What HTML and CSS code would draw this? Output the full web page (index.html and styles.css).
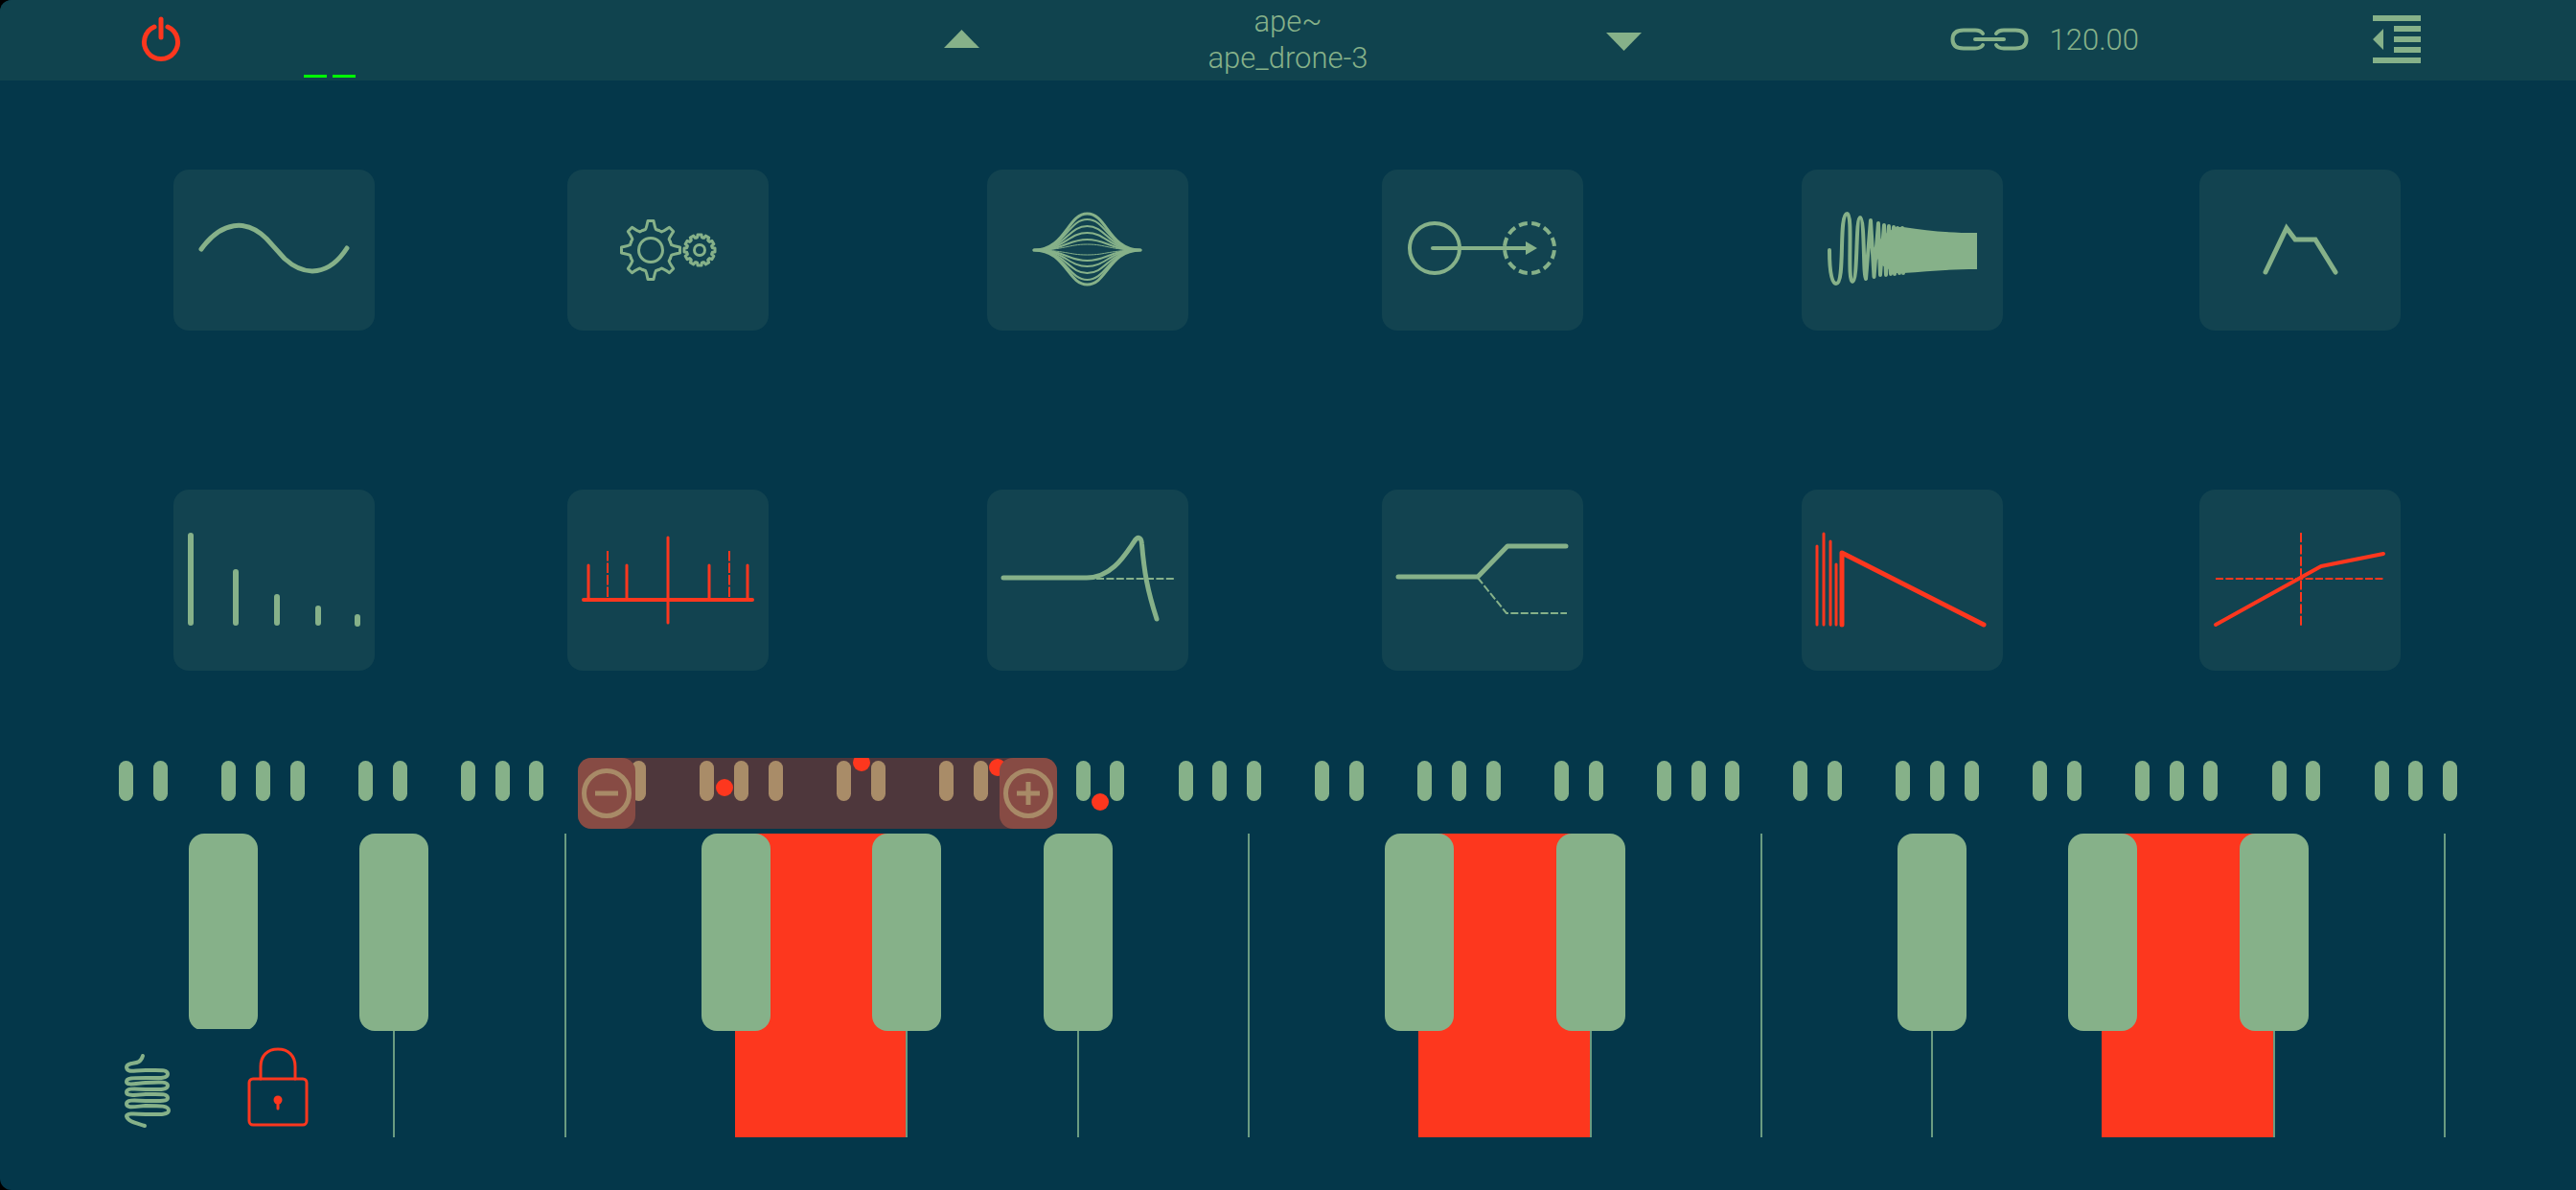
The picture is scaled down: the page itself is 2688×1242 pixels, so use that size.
FILE: index.html
```
<!DOCTYPE html>
<html lang="en">
<head>
  <meta charset="UTF-8" />
  <title>ape~</title>
  <link rel="stylesheet" href="styles.css">
</head>
<body>
  <div class="app">

    <header class="topbar">
      <div class="topbar-left">
        <button class="power" aria-label="Power">
          <svg width="40" height="48" viewBox="0 0 40 48">
            <path d="M13 10 A17.5 17.5 0 1 0 27 10" />
            <path d="M20 2 V21" />
          </svg>
        </button>
        <div class="meter"><span></span><span></span></div>
      </div>

      <div class="preset">
        <button aria-label="Previous preset">
          <svg width="37" height="20" viewBox="0 0 37 20"><path class="solid" d="M0 18 L18.5 -1 L37 18 Z" /></svg>
        </button>
        <div class="preset-name">
          <div>ape~</div>
          <div>ape_drone-3</div>
        </div>
        <button aria-label="Next preset">
          <svg width="37" height="20" viewBox="0 0 37 20"><path class="solid" d="M0 2 L18.5 21 L37 2 Z" /></svg>
        </button>
      </div>

      <div class="topbar-right">
        <div class="tempo">
          <button aria-label="Link">
            <svg width="82" height="24" viewBox="0 0 82 24">
              <path class="w4" d="M34 5 C32 2 30 1.500 26 1.5 H14 C6 1.5 2.500 5 2.5 11 S6 20.5 14 20.5 H26 C30 20.5 32 20 34 17" />
              <path class="w4" d="M48 5 C50 2 52 1.5 56 1.5 H68 C76 1.5 79.5 5 79.5 11 S76 20.5 68 20.5 H56 C52 20.5 50 20 48 17" />
              <path class="w4" d="M26 11 H56" />
            </svg>
          </button>
          <span>120.00</span>
        </div>
        <button aria-label="Menu">
          <svg width="50" height="50" viewBox="0 0 50 50">
            <path class="solid" d="M0 -1 H50 V5 H0 Z M22 10 H50 V16 H22 Z M22 21 H50 V27 H22 Z M22 32 H50 V38 H22 Z M0 43 H50 V49 H0 Z M11 13 V35 L0 24 Z" />
          </svg>
        </button>
      </div>
    </header>

    <main class="modules">
      <div class="module-group">
        <button class="tile" aria-label="Oscillator">
          <svg viewBox="0 0 210 168">
            <path class="w5" d="M29 83 C50 54 76 51 97 72 L116 93 C138 113 163 110 181 82" />
          </svg>
        </button>
        <button class="tile" aria-label="Mechanics">
          <svg viewBox="0 0 210 168">
            <defs>
              <path id="tooth" d="M-8.5 -20.5 L-5.5 -21.5 Q-4.5 -23 -3 -30.5 L3 -30.5 Q4.5 -23 5.5 -21.5 L8.5 -20.5" />
              <path id="cog" d="M-3.5 -13 L-2.3 -13.3 L-2 -16 L2 -16 L2.3 -13.3 L3.5 -13" />
            </defs>
            <g class="w3" transform="translate(87 84)">
              <circle r="12.5" />
              <use href="#tooth" />
              <use href="#tooth" transform="rotate(45)" />
              <use href="#tooth" transform="rotate(90)" />
              <use href="#tooth" transform="rotate(135)" />
              <use href="#tooth" transform="rotate(180)" />
              <use href="#tooth" transform="rotate(225)" />
              <use href="#tooth" transform="rotate(270)" />
              <use href="#tooth" transform="rotate(315)" />
            </g>
            <g class="w3" transform="translate(138 84)">
              <circle r="5.5" />
              <use href="#cog" />
              <use href="#cog" transform="rotate(30)" />
              <use href="#cog" transform="rotate(60)" />
              <use href="#cog" transform="rotate(90)" />
              <use href="#cog" transform="rotate(120)" />
              <use href="#cog" transform="rotate(150)" />
              <use href="#cog" transform="rotate(180)" />
              <use href="#cog" transform="rotate(210)" />
              <use href="#cog" transform="rotate(240)" />
              <use href="#cog" transform="rotate(270)" />
              <use href="#cog" transform="rotate(300)" />
              <use href="#cog" transform="rotate(330)" />
            </g>
          </svg>
        </button>
        <button class="tile" aria-label="Harmonics">
          <svg viewBox="0 0 210 189">
            <path class="w6" d="M18 48 V139 M65 86 V139 M108 112 V139 M151 124 V139 M192 133 V140" />
          </svg>
        </button>
        <button class="tile active" aria-label="Sidebands">
          <svg viewBox="0 0 210 189">
            <path class="w4" d="M17 115 H193" />
            <path class="w3" d="M105 50 V139 M22 79 V115 M62 79 V115 M148 79 V115 M188 79 V115" />
            <path class="w2" stroke-dasharray="10.5 2" d="M42 64 V115 M169 64 V115" />
          </svg>
        </button>
      </div>

      <div class="module-group">
        <button class="tile" aria-label="String">
          <svg viewBox="0 0 210 168">
            <path class="w3" d="M49 84 C82 84 84 46 104.5 46 S127 84 160 84" />
            <path class="w2" d="M49 84 C82 84 84 52 104.5 52 S127 84 160 84" />
            <path class="w2" d="M49 84 C82 84 84 59 104.5 59 S127 84 160 84" />
            <path class="w2" d="M49 84 C82 84 84 66 104.5 66 S127 84 160 84" />
            <path class="w2" d="M49 84 C82 84 84 73 104.5 73 S127 84 160 84" />
            <path class="w1" d="M49 84 C82 84 84 78 104.5 78 S127 84 160 84" />
            <path class="w1" d="M49 84 C82 84 84 89 104.5 89 S127 84 160 84" />
            <path class="w2" d="M49 84 C82 84 84 95 104.5 95 S127 84 160 84" />
            <path class="w2" d="M49 84 C82 84 84 101 104.5 101 S127 84 160 84" />
            <path class="w2" d="M49 84 C82 84 84 108 104.5 108 S127 84 160 84" />
            <path class="w2" d="M49 84 C82 84 84 115 104.5 115 S127 84 160 84" />
            <path class="w3" d="M49 84 C82 84 84 120 104.5 120 S127 84 160 84" />
          </svg>
        </button>
        <button class="tile" aria-label="Shift">
          <svg viewBox="0 0 210 168">
            <circle class="w4" cx="55" cy="82" r="26" />
            <circle class="w4 dashed" cx="154" cy="82" r="26" pathLength="120" stroke-dasharray="6.6 3.4" stroke-dashoffset="-1.7" />
            <path class="w4" d="M53 82 H152" />
            <path class="solid" d="M150 75 L162 82 L150 89 Z" />
          </svg>
        </button>
        <button class="tile" aria-label="Filter">
          <svg viewBox="0 0 210 189">
            <path class="w2" stroke-dasharray="8 2.4" d="M114 93 H195" />
            <path class="w5" d="M17 92 H104 C130 92 144 68 153 55 C157 48 161 49 161.5 57 C164 86 167 104 177 135" />
          </svg>
        </button>
        <button class="tile" aria-label="Split">
          <svg viewBox="0 0 210 189">
            <path class="w5" d="M17 91 H100 L131 59 H192" />
            <path class="w2" stroke-dasharray="8 2.4" d="M100 92 L130 129 H193" />
          </svg>
        </button>
      </div>

      <div class="module-group">
        <button class="tile" aria-label="Chirp">
          <svg viewBox="0 0 210 168">
            <path class="w4" d="M29 84 C29 110 32 119 36 119 C46 119 38 46 47.5 46 C54 46 47 117 53 117 C59 117 56 50 61 50 C66 50 64 112 67 114 L72 53 L75.5 112 L80 56 L82 110 L86 58 L88 110 L91 59 L93 109 L96 60 L97 109 L100 61 L102 108 L105 61 L106 108" />
            <path class="solid" d="M73 84 L86 68 L98 60 H106 C132 64 152 66 183 66 V104 C152 104 132 106 106 108 L98 108 L84 100 Z" />
          </svg>
        </button>
        <button class="tile" aria-label="Envelope">
          <svg viewBox="0 0 210 168">
            <path class="w5 sharp" d="M69 107 L91 61 L100 73 H121 L142 107" />
          </svg>
        </button>
        <button class="tile active" aria-label="Reverb">
          <svg viewBox="0 0 210 189">
            <path class="w3" d="M16 59 V141 M23 46 V141 M30 54 V141 M36 78 V141" />
            <path class="w5" d="M42 141 V66 L190 141" />
          </svg>
        </button>
        <button class="tile active" aria-label="Waveshaper">
          <svg viewBox="0 0 210 189">
            <path class="w2" stroke-dasharray="10 2.4" d="M106 45 V142" />
            <path class="w2" stroke-dasharray="8 2.4" d="M17 93 H193" />
            <path class="w4" d="M17 141 L127 80 L192 67" />
          </svg>
        </button>
      </div>
    </main>

    <div class="overview">
      <div class="octaves">
        <div class="octave"><i></i><i></i><i></i><i></i><i></i></div>
        <div class="octave"><i></i><i></i><i></i><i></i><i></i></div>
        <div class="octave"><i></i><i></i><i></i><i></i><i></i></div>
        <div class="octave"><i></i><i></i><i></i><i></i><i></i></div>
        <div class="octave"><i></i><i></i><i></i><i></i><i></i></div>
        <div class="octave"><i></i><i></i><i></i><i></i><i></i></div>
        <div class="octave"><i></i><i></i><i></i><i></i><i></i></div>
        <div class="octave"><i></i><i></i><i></i><i></i><i></i></div>
        <div class="octave"><i></i><i></i><i></i><i></i><i></i></div>
        <div class="octave"><i></i><i></i><i></i><i></i><i></i></div>
      </div>
      <div class="range"></div>
      <!-- playing notes: pitch across, velocity down -->
      <span class="note" style="left: 28.13%; top: 42%"></span>
      <span class="note" style="left: 33.43%; top: 7%"></span>
      <span class="note" style="left: 38.73%; top: 13%"></span>
      <span class="note" style="left: 42.71%; top: 62%"></span>
      <div class="range-knobs">
        <button aria-label="Fewer keys">
          <svg width="52" height="52" viewBox="0 0 52 52"><circle cx="26" cy="26" r="23.5" /><path d="M14 26 H38" /></svg>
        </button>
        <button aria-label="More keys">
          <svg width="52" height="52" viewBox="0 0 52 52"><circle cx="26" cy="26" r="23.5" /><path d="M14 26 H38 M26 14 V38" /></svg>
        </button>
      </div>
    </div>

    <div class="keyboard">
      <div class="keys">
        <div class="key"><button class="white" aria-label="C"></button><button class="black" aria-label="C sharp"></button></div>
        <div class="key"><button class="white" aria-label="D"></button><button class="black" aria-label="D sharp"></button></div>
        <div class="key"><button class="white" aria-label="E"></button></div>
        <div class="key"><button class="white" aria-label="F"></button><button class="black" aria-label="F sharp"></button></div>
        <div class="key held"><button class="white" aria-label="G"></button><button class="black" aria-label="G sharp"></button></div>
        <div class="key"><button class="white" aria-label="A"></button><button class="black" aria-label="A sharp"></button></div>
        <div class="key"><button class="white" aria-label="B"></button></div>
        <div class="key"><button class="white" aria-label="C"></button><button class="black" aria-label="C sharp"></button></div>
        <div class="key held"><button class="white" aria-label="D"></button><button class="black" aria-label="D sharp"></button></div>
        <div class="key"><button class="white" aria-label="E"></button></div>
        <div class="key"><button class="white" aria-label="F"></button><button class="black" aria-label="F sharp"></button></div>
        <div class="key"><button class="white" aria-label="G"></button><button class="black" aria-label="G sharp"></button></div>
        <div class="key held"><button class="white" aria-label="A"></button><button class="black" aria-label="A sharp"></button></div>
        <div class="key"><button class="white" aria-label="B"></button></div>
      </div>
      <div class="key-tools">
        <button aria-label="Spring">
          <svg width="48" height="76" viewBox="0 0 48 76">
            <path class="w4" d="M19 1 C17 8 13 8 7 9 C3 10 2 11 2 13 C3 19 9 16 22 16 C38 16 45 15 45 20 C45 25 34 24 22 24 C8 24 2 24 2 28 C2 32 10 30 22 29 C38 28 45 28 45 32 C45 37 34 36 22 36 C8 35 2 35 2 39 C2 43 10 42 22 41 C38 41 45 40 45 45 C45 49 34 48 22 48 C8 47 2 47 2 51 C2 56 10 54 22 53 C38 53 46 53 46 58 C46 63 34 62 22 62 C8 61 2 61 2 64 C4 70 12 71 21 74" />
          </svg>
        </button>
        <button class="active" aria-label="Lock">
          <svg width="64" height="84" viewBox="0 0 64 84">
            <rect class="w3" x="2" y="33" width="60" height="48" rx="4" />
            <path class="w3" d="M14 33 V20 C14 9 21 2 32 2 S50 9 50 20 V33" />
            <circle class="solid" cx="32" cy="55" r="4.5" />
            <path class="w3" d="M32 55 V64" />
          </svg>
        </button>
      </div>
    </div>

  </div>
</body>
</html>
```
FILE: styles.css
```
* {
  margin: 0;
  padding: 0;
  box-sizing: border-box;
}
body {
  background: #000;
  color: #86b189;
  font-family: Roboto, "Liberation Sans", sans-serif;
  font-size: 31px;
  font-weight: 300;
  line-height: 38px;
}
button {
  display: block;
  background: none;
  border: none;
  color: inherit;
  font: inherit;
  cursor: pointer;
}
svg {
  display: block;
  fill: none;
  stroke: currentColor;
  stroke-linecap: round;
  stroke-linejoin: round;
  overflow: visible;
}
.solid {
  fill: currentColor;
  stroke: none;
}
.active {
  color: #fd371e;
}
.w1 { stroke-width: 1; }
.w2 { stroke-width: 2; stroke-linecap: butt; }
.w3 { stroke-width: 3; }
.w4 { stroke-width: 4; }
.w5 { stroke-width: 5; }
.w6 { stroke-width: 6; }
.dashed { stroke-linecap: butt; }
.sharp { stroke-linejoin: miter; }

.app {
  min-height: 100vh;
  background: #04374a;
  border-radius: 12px 0 0 12px;
  overflow: hidden;
}

/* top bar */
.topbar {
  display: grid;
  grid-template-columns: 1fr 738px 1fr;
  height: 84px;
  background: #10434e;
}
.topbar-left {
  display: flex;
  align-items: center;
  padding-left: 148px;
}
.power {
  color: #fd371e;
}
.power path {
  stroke-width: 5;
}
.meter {
  display: flex;
  gap: 6px;
  align-self: flex-end;
  margin: 0 0 3px 129px;
}
.meter span {
  width: 24px;
  height: 3px;
  background: #0f0;
}
.preset {
  display: flex;
  align-items: center;
  justify-content: space-between;
  padding-left: 10px;
}
.preset-name {
  margin-right: 10px;
  text-align: center;
}
.topbar-right {
  display: flex;
  align-items: center;
  justify-content: flex-end;
  gap: 244px;
  padding-right: 162px;
}
.tempo {
  display: flex;
  align-items: center;
  gap: 22px;
}

/* module tiles */
.modules {
  display: grid;
  grid-template-columns: 621fr 621fr 625fr;
  gap: 228px;
  padding: 93px 183px 91px 181px;
}
.module-group {
  display: grid;
  grid-template-columns: 210px 210px;
  grid-template-rows: 168px 189px;
  justify-content: space-between;
  row-gap: 166px;
}
.tile {
  background: #124350;
  border-radius: 16px;
}
.tile svg {
  width: 100%;
  height: 100%;
}

/* full range strip */
.overview {
  position: relative;
  height: 74px;
  margin-bottom: 5px;
  padding: 3px 78px 0 114px;
  overflow: hidden;
}
.octaves {
  display: flex;
}
.octave {
  flex: 1;
  display: grid;
  grid-template-columns: repeat(7, 1fr);
  justify-items: center;
}
.octave i {
  width: 15px;
  height: 42px;
  border-radius: 8px;
  background: #86b189;
}
.octave i:nth-child(3) {
  grid-column: 4;
}
.range,
.range-knobs {
  position: absolute;
  top: 0;
  left: 22.45%;
  width: 18.57%;
  height: 100%;
  border-radius: 14px;
}
.range {
  background: rgba(253, 55, 30, 0.3);
}
.range-knobs {
  display: flex;
  justify-content: space-between;
}
.range-knobs button {
  display: flex;
  align-items: center;
  justify-content: center;
  width: 60px;
  border-radius: 14px;
  background: #874b44;
  color: #a88a67;
}
.range-knobs svg {
  stroke-width: 5;
  stroke-linecap: butt;
}
.note {
  position: absolute;
  width: 18px;
  height: 18px;
  border-radius: 50%;
  background: #fd371e;
  transform: translate(-50%, -50%);
}

/* keyboard */
.keyboard {
  position: relative;
  margin: 0 132px;
  padding-bottom: 55px;
}
.keys {
  display: grid;
  grid-template-columns: 102fr repeat(13, 178fr) 4fr;
  height: 317px;
}
.key {
  position: relative;
}
.white {
  width: 100%;
  height: 100%;
  border-right: 2px solid #6a9b81;
}
.held {
  margin-left: -2px;
}
.held .white {
  background: #fd371e;
}
.black {
  position: absolute;
  z-index: 1;
  top: 0;
  right: -35px;
  width: 72px;
  height: 206px;
  border-radius: 16px;
  background: #86b189;
}
.key-tools {
  position: absolute;
  z-index: 2;
  top: 204px;
  left: -2px;
  display: flex;
  gap: 80px;
  align-items: flex-end;
  width: 230px;
  height: 114px;
  padding-bottom: 11px;
  background: #04374a;
}
```
